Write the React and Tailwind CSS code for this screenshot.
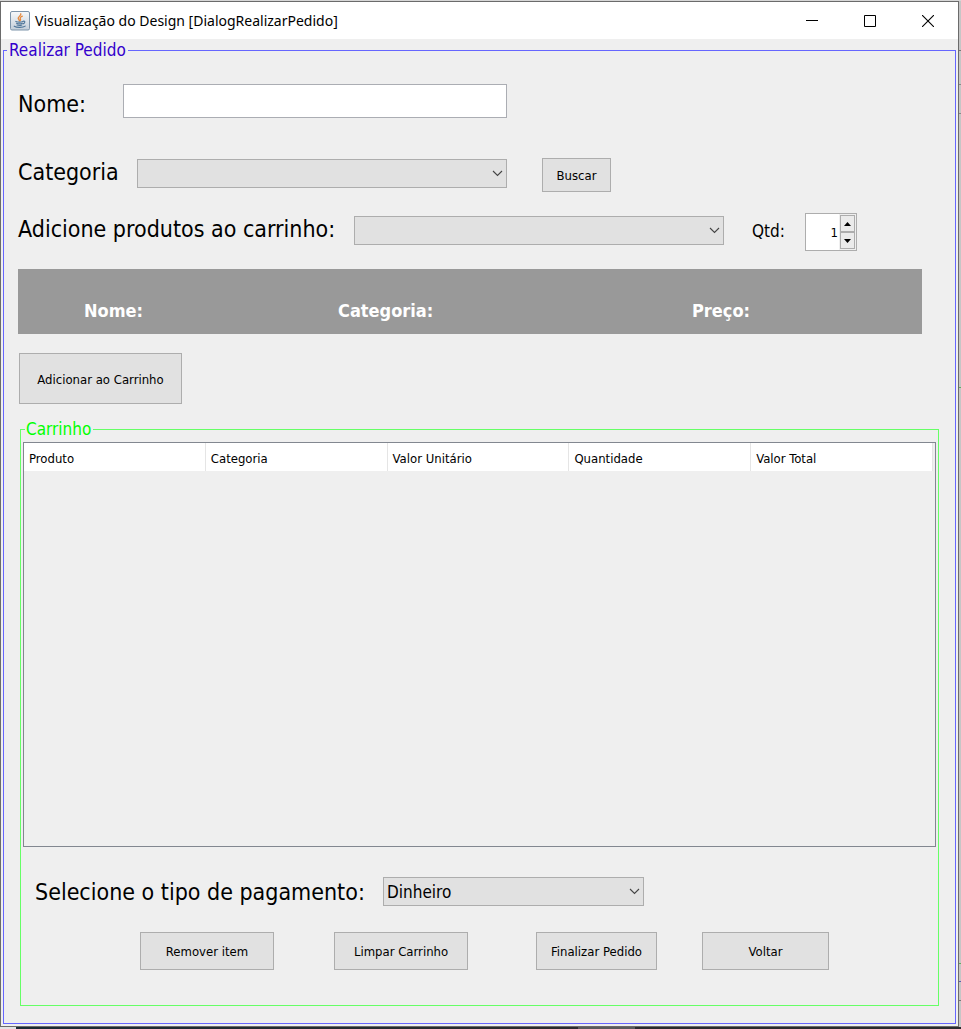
import React, { useState } from "react";

const FONT = "font-['DejaVu_Sans_Condensed','Noto_Sans',sans-serif]";

function JavaIcon() {
  return (
    <svg width="20" height="20" viewBox="0 0 20 20" aria-hidden="true">
      <defs>
        <linearGradient id="tile" x1="0" y1="0" x2="0" y2="1">
          <stop offset="0" stopColor="#f7f9fb" />
          <stop offset="1" stopColor="#c3ced9" />
        </linearGradient>
      </defs>
      <rect x="0.5" y="0.5" width="19" height="18.5" rx="1.5" fill="url(#tile)" stroke="#7d94aa" />
      <path d="M10.8 2.8c.8 1.7-2.8 2.7-2.6 4.4.1 1 1.2 1.6 1.1 2.6M12.3 5.2c-1.7.8-2.5 1.5-2 2.5.4.8.7 1.3-.3 2.2" fill="none" stroke="#e5883c" strokeWidth="1.3" strokeLinecap="round" />
      <path d="M5.8 10.4c1.8.7 5.4.7 7.2 0M6.5 12.3c1.6.6 4.4.6 5.9 0M7 14c1.4.5 3.6.5 4.8 0" fill="none" stroke="#4f7699" strokeWidth="1.1" strokeLinecap="round" />
      <path d="M13.2 10.2c2.2-.5 2.2 2-.2 2.7M4.2 15.2c2.6 1.6 8.7 1.5 11-.1" fill="none" stroke="#4f7699" strokeWidth="1.1" strokeLinecap="round" />
    </svg>
  );
}

function Combo({ id, className, children }) {
  return (
    <div className={"relative h-[29px] " + className}>
      <select
        id={id}
        className="block h-full w-full appearance-none rounded-none border border-[#adadad] bg-[#e1e1e1] pl-[3px] pr-6 text-[17px] leading-6 text-black outline-none"
      >
        {children}
      </select>
      <svg className="pointer-events-none absolute right-1 top-[11px]" width="11" height="7" viewBox="0 0 11 7" aria-hidden="true">
        <path d="M1 1l4.5 4.5L10 1" fill="none" stroke="#444" strokeWidth="1.1" />
      </svg>
    </div>
  );
}

function Button({ className, children }) {
  return (
    <button type="button" className={"border border-[#adadad] bg-[#e1e1e1] pt-[2px] text-center text-[13px] leading-4 text-black " + className}>
      {children}
    </button>
  );
}

function Spinner({ id }) {
  const [value, setValue] = useState(1);
  const step = "flex flex-1 items-center justify-center border border-[#adadad] bg-[#ebebeb]";
  return (
    <div className="flex h-[38px] w-[52px] border border-[#adadad] bg-white">
      <input
        id={id}
        type="text"
        inputMode="numeric"
        value={value}
        onChange={(e) => setValue(Number(e.target.value) || 0)}
        className="w-0 min-w-0 flex-1 bg-white pr-px pt-[2px] text-right text-[13px] text-black outline-none"
      />
      <div className="flex w-[17px] flex-col bg-[#efefef] p-px">
        <button type="button" aria-label="Aumentar" className={step} onClick={() => setValue(value + 1)}>
          <svg width="7" height="4" viewBox="0 0 7 4"><path d="M0 4L3.5 0L7 4z" /></svg>
        </button>
        <button type="button" aria-label="Diminuir" className={step} onClick={() => setValue(value - 1)}>
          <svg width="7" height="4" viewBox="0 0 7 4"><path d="M0 0L3.5 4L7 0z" /></svg>
        </button>
      </div>
    </div>
  );
}

function TitleBar() {
  const control = "flex h-full w-[58px] items-center justify-center";
  return (
    <header className="flex h-[37px] items-center bg-white pl-[9px] pr-px font-['Noto_Sans','Open_Sans',sans-serif]">
      <JavaIcon />
      <h1 className="flex-1 pl-[5px] text-sm leading-5 text-black">Visualização do Design [DialogRealizarPedido]</h1>
      <button type="button" aria-label="Minimizar" className={control}>
        <svg width="12" height="12" viewBox="0 0 12 12"><path d="M0 5.5h12" stroke="#000" /></svg>
      </button>
      <button type="button" aria-label="Maximizar" className={control}>
        <svg width="12" height="12" viewBox="0 0 12 12"><path d="M.5.5h11v11H.5z" fill="none" stroke="#000" /></svg>
      </button>
      <button type="button" aria-label="Fechar" className={control}>
        <svg width="12" height="12" viewBox="0 0 12 12"><path d="M0 0l12 12M12 0L0 12" stroke="#000" strokeWidth="1.1" /></svg>
      </button>
    </header>
  );
}

const COLUMNS = ["Produto", "Categoria", "Valor Unitário", "Quantidade", "Valor Total"];

function Cart() {
  return (
    <fieldset className="mx-4 mt-[14px] flex min-w-0 flex-1 flex-col border border-[#66ff66] pb-[35px]">
      <legend className="ml-1 px-px pr-[2px] text-[17px] leading-[23px] text-[#00ff00]">Carrinho</legend>
      <div className="mx-[2px] mt-px min-h-[405px] flex-1 border border-[#828790] pr-[2px]">
        <table className="w-full table-fixed border-separate border-spacing-0">
          <thead>
            <tr className="h-7 bg-white">
              {COLUMNS.map((name) => (
                <th key={name} scope="col" className="border-r border-[#e5e5e5] px-[5px] pt-1 text-left text-[13px] font-normal leading-4">
                  {name}
                </th>
              ))}
            </tr>
          </thead>
        </table>
      </div>
      <div className="mt-[30px] flex items-center pl-[14px]">
        <label htmlFor="pagamento" className="w-[348px] whitespace-nowrap pt-[2px] text-[23px] leading-[27px]">Selecione o tipo de pagamento:</label>
        <Combo id="pagamento" className="w-[261px]">
          <option>Dinheiro</option>
        </Combo>
      </div>
      <div className="mt-[26px] flex pl-[119px]">
        <Button className="h-[38px] w-[134px]">Remover item</Button>
        <Button className="ml-[60px] h-[38px] w-[134px]">Limpar Carrinho</Button>
        <Button className="ml-[68px] h-[38px] w-[121px]">Finalizar Pedido</Button>
        <Button className="ml-[45px] h-[38px] w-[127px]">Voltar</Button>
      </div>
    </fieldset>
  );
}

function EdgeStrip() {
  return (
    <div className="flex w-[2px] flex-col bg-[#c6c6c6]" aria-hidden="true">
      <div className="h-[50px] border-b border-[#777]" />
      <div className="h-[34px] border-b border-[#888]" />
      <div className="h-[29px] border-b border-[#888]" />
      <div className="h-[274px] border-b border-[#5fae5f]" />
      <div className="h-[576px] border-b border-[#5fae5f]" />
      <div className="h-[18px] border-b border-[#5b5bb0]" />
      <div className="h-[19px] border-b border-[#777]" />
    </div>
  );
}

export default function App() {
  return (
    <div className={"flex min-h-screen flex-col bg-[#d6d6d6] pt-px text-black " + FONT}>
      <div className="flex flex-1">
        <main className="flex min-w-0 flex-1 flex-col border border-[#6b6b6b] bg-[#efefef]">
          <TitleBar />
          <fieldset className="mx-[2px] mb-[2px] flex min-w-0 flex-1 flex-col border border-[#6666ff] pb-[17px]">
            <legend className="ml-[3px] px-[2px] text-[17px] leading-[23px] text-[#3300cc]">Realizar Pedido</legend>

            <div className="mt-[22px] flex items-center pl-[14px]">
              <label htmlFor="nome" className="w-[105px] pt-[7px] text-[23px] leading-[27px]">Nome:</label>
              <input id="nome" type="text" className="h-[34px] w-[384px] border border-[#abadb3] bg-white px-1 text-[17px] outline-none" />
            </div>

            <div className="mt-10 flex items-center pl-[14px]">
              <label htmlFor="categoria" className="w-[119px] pb-[5px] text-[23px] leading-[27px]">Categoria</label>
              <Combo id="categoria" className="mb-[3px] w-[370px]" />
              <Button className="ml-[35px] h-[34px] w-[69px]">Buscar</Button>
            </div>

            <div className="mt-[21px] flex items-center pl-[14px]">
              <label htmlFor="produto" className="w-[336px] whitespace-nowrap pb-[5px] text-[23px] leading-[27px]">Adicione produtos ao carrinho:</label>
              <Combo id="produto" className="mb-[3px] w-[370px]" />
              <label htmlFor="qtd" className="ml-7 w-[53px] pb-[2px] text-[17px] leading-6">Qtd:</label>
              <Spinner id="qtd" />
            </div>

            <div className="ml-[14px] mr-[33px] mt-[18px] flex h-[65px] items-end bg-[#999999] pb-[11px] pl-[66px] text-lg font-bold leading-6 text-white">
              <span className="w-[254px]">Nome:</span>
              <span className="w-[354px]">Categoria:</span>
              <span>Preço:</span>
            </div>

            <div className="mt-[19px] flex pl-[15px]">
              <Button className="h-[51px] w-[163px]">Adicionar ao Carrinho</Button>
            </div>

            <Cart />
          </fieldset>
        </main>
        <EdgeStrip />
      </div>
      <div className="flex h-[2px]" aria-hidden="true">
        <div className="w-4 bg-[#e4e4e4]" />
        <div className="flex-1 bg-linear-to-r from-[#1b2a33] to-[#2b2b2e]" />
        <div className="w-[57px] bg-[#5a5a5c]" />
        <div className="w-[326px] bg-[#2b2b2e]" />
      </div>
    </div>
  );
}
